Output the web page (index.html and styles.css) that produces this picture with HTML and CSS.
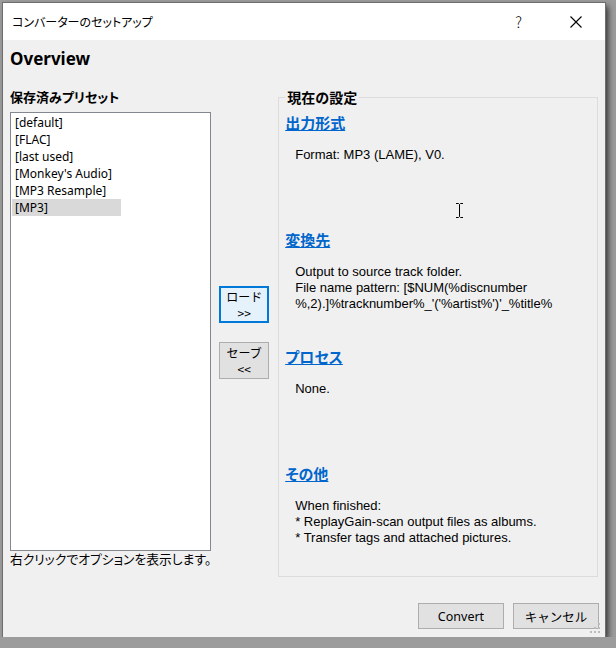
FILE: index.html
```html
<!DOCTYPE html>
<html lang="ja">

<head>
    <meta charset="UTF-8">
    <title>コンバーターのセットアップ</title>
    <link rel="stylesheet" href="styles.css">
</head>

<body>
    <div class="window">
        <!-- Title bar -->
        <div class="titlebar">
            <span class="title">コンバーターのセットアップ</span>
            <span class="help">?</span>
            <svg class="close" width="12" height="12" viewBox="0 0 12 12">
                <path d="M0.5 0.5 L11.5 11.5 M11.5 0.5 L0.5 11.5" stroke="#000" stroke-width="1.1" fill="none"/>
            </svg>
        </div>

        <h1 class="overview">Overview</h1>

        <div class="main">
            <!-- Saved presets -->
            <div class="presets">
                <div class="label">保存済みプリセット</div>
                <ul class="preset-list">
                    <li>[default]</li>
                    <li>[FLAC]</li>
                    <li>[last used]</li>
                    <li>[Monkey's Audio]</li>
                    <li>[MP3 Resample]</li>
                    <li class="selected">[MP3]</li>
                </ul>
                <div class="hint">右クリックでオプションを表示します。</div>
            </div>

            <!-- Load / save -->
            <div class="actions">
                <button class="side-btn default"><span>ロード</span><span>&gt;&gt;</span></button>
                <button class="side-btn"><span>セーブ</span><span>&lt;&lt;</span></button>
            </div>

            <!-- Current settings -->
            <fieldset class="current">
                <legend>現在の設定</legend>
                <div class="section">
                    <a class="sec-title" href="#">出力形式</a>
                    <p>Format: MP3 (LAME), V0.</p>
                </div>
                <div class="section">
                    <a class="sec-title" href="#">変換先</a>
                    <p>Output to source track folder.<br>File name pattern: [$NUM(%discnumber<br>%,2).]%tracknumber%_'('%artist%')'_%title%</p>
                </div>
                <div class="section">
                    <a class="sec-title" href="#">プロセス</a>
                    <p>None.</p>
                </div>
                <div class="section">
                    <a class="sec-title" href="#">その他</a>
                    <p>When finished:<br>* ReplayGain-scan output files as albums.<br>* Transfer tags and attached pictures.</p>
                </div>
            </fieldset>
        </div>

        <div class="footer">
            <button class="btn">Convert</button>
            <button class="btn">キャンセル</button>
        </div>

        <!-- mouse cursor -->
        <svg class="ibeam" width="7" height="15" viewBox="0 0 7 15">
            <path d="M0 0.5 H2.5 L3.5 1.5 L4.5 0.5 H7 M3.5 1.5 V13.5 M0 14.5 H2.5 L3.5 13.5 L4.5 14.5 H7" stroke="#000" stroke-width="1" fill="none"/>
        </svg>

        <!-- size grip -->
        <svg class="grip" width="10" height="10" viewBox="0 0 10 10">
            <rect x="8" y="0" width="2" height="2" fill="#bcbcbc"/>
            <rect x="4" y="4" width="2" height="2" fill="#bcbcbc"/>
            <rect x="8" y="4" width="2" height="2" fill="#bcbcbc"/>
            <rect x="0" y="8" width="2" height="2" fill="#bcbcbc"/>
            <rect x="4" y="8" width="2" height="2" fill="#bcbcbc"/>
            <rect x="8" y="8" width="2" height="2" fill="#bcbcbc"/>
        </svg>
    </div>
</body>

</html>
```

FILE: styles.css
```css
/* Converter setup dialog */

body {
    margin: 0;
    padding: 0;
    background-color: #9c9c9c;
    font-family: "Noto Sans", "Noto Sans CJK JP", sans-serif;
    font-size: 12px;
    color: #000;
}

.window {
    position: relative;
    width: 602px;
    height: 634px;
    margin: 3px 0 0 3px;
    background-color: #f0f0f0;
    box-shadow: 0 0 0 1px #6e6e6e, 3px 3px 6px rgba(0, 0, 0, 0.7);
    display: flex;
    flex-direction: column;
}

.titlebar {
    height: 37px;
    background-color: #fff;
    display: flex;
    align-items: center;
    padding-left: 9px;
    font-family: "Noto Sans CJK JP", sans-serif;
    font-feature-settings: "palt";
}

.title {
    font-size: 12px;
    flex: 1;
}

.help {
    font-size: 15px;
    font-weight: 300;
    margin-right: 48px;
}

.close {
    margin-right: 23px;
}

.overview {
    margin: 0;
    height: 48px;
    box-sizing: border-box;
    padding: 9px 0 0 7px;
    font-size: 17px;
    line-height: 20px;
    font-weight: bold;
}

.main {
    display: flex;
    padding: 0 7px;
    height: 502px;
}

.presets {
    width: 202px;
}

.label {
    height: 18px;
    line-height: 18px;
    font-weight: bold;
    font-size: 13px;
    font-family: "Noto Sans CJK JP", sans-serif;
    font-feature-settings: "palt";
}

.preset-list {
    list-style: none;
    margin: 6px 0 0 0;
    padding: 1px 0 0 1px;
    height: 439px;
    box-sizing: border-box;
    background-color: #fff;
    border: 1px solid #828790;
}

.preset-list li {
    height: 17px;
    line-height: 17px;
    width: 106px;
    padding-left: 3px;
}

.preset-list li.selected {
    background-color: #d9d9d9;
}

.hint {
    line-height: 16px;
    font-size: 12.8px;
    font-family: "Noto Sans CJK JP", sans-serif;
    font-feature-settings: "palt";
}

.actions {
    margin-left: 8px;
    padding-top: 198px;
    width: 50px;
    display: flex;
    flex-direction: column;
    gap: 19px;
}

.side-btn {
    width: 50px;
    height: 37px;
    padding: 0;
    display: flex;
    flex-direction: column;
    align-items: center;
    justify-content: center;
    font-family: "Noto Sans CJK JP", sans-serif;
    font-size: 12px;
    line-height: 16px;
    background-color: #e1e1e1;
    border: 1px solid #adadad;
    color: #000;
}

.side-btn span {
    display: block;
    height: 16px;
}

.side-btn.default {
    background-color: #e5f1fb;
    border: 2px solid #0078d7;
}

.current {
    margin: 0 0 0 9px;
    width: 321px;
    height: 489px;
    box-sizing: border-box;
    padding: 7px 6px 0 6px;
    border: 1px solid #dcdcdc;
}

.current legend {
    padding: 0 2px;
    height: 18px;
    line-height: 18px;
    font-size: 14px;
    font-weight: bold;
    font-family: "Noto Sans CJK JP", sans-serif;
}

.section {
    height: 117px;
}

.sec-title {
    display: block;
    height: 20px;
    line-height: 20px;
    font-size: 15px;
    font-weight: bold;
    color: #0066cc;
    font-family: "Noto Sans CJK JP", sans-serif;
    font-feature-settings: "palt";
}

.section p {
    margin: 14px 0 0 10px;
    line-height: 16px;
    font-family: "Liberation Sans", Arial, sans-serif;
    font-size: 13px;
}

.footer {
    display: flex;
    justify-content: flex-end;
    gap: 9px;
    padding: 13px 6px 0 0;
}

.btn {
    width: 86px;
    height: 26px;
    background-color: #e1e1e1;
    border: 1px solid #adadad;
    font-family: "Noto Sans", "Noto Sans CJK JP", sans-serif;
    font-size: 12.5px;
    color: #000;
}

.ibeam {
    position: absolute;
    left: 453px;
    top: 200px;
}

.grip {
    position: absolute;
    right: 5px;
    bottom: 4px;
}
```
